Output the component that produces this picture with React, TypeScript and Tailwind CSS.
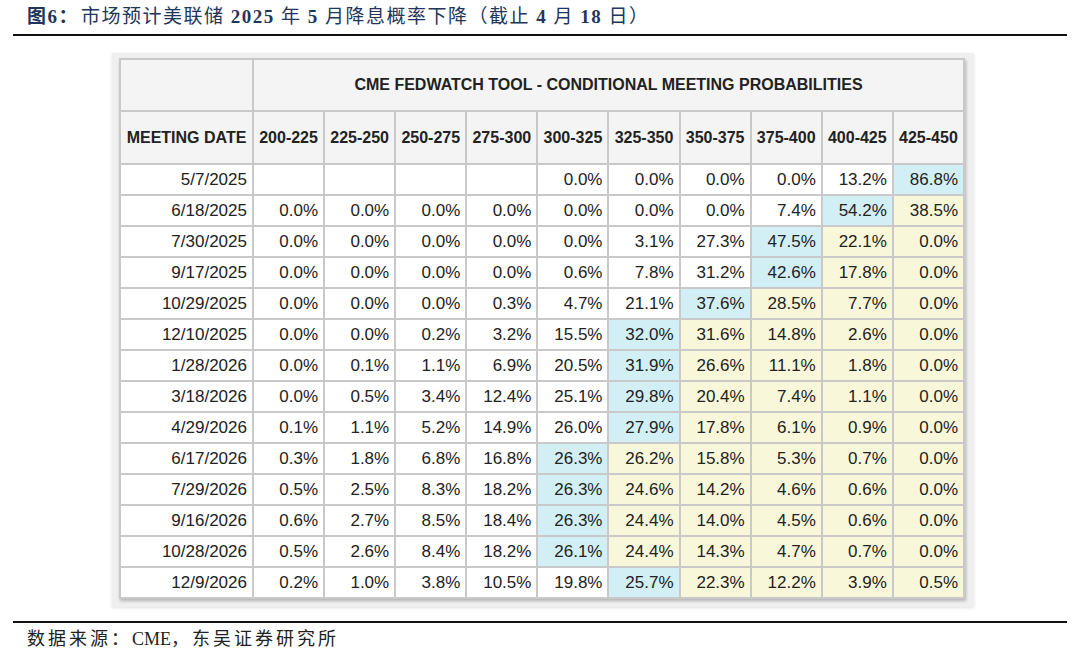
import React from 'react';

const rates = ['200-225', '225-250', '250-275', '275-300', '300-325', '325-350', '350-375', '375-400', '400-425', '425-450'];

// [date, blue column index, values]
const rows: [string, number, string[]][] = [
  ['5/7/2025', 9, ['', '', '', '', '0.0%', '0.0%', '0.0%', '0.0%', '13.2%', '86.8%']],
  ['6/18/2025', 8, ['0.0%', '0.0%', '0.0%', '0.0%', '0.0%', '0.0%', '0.0%', '7.4%', '54.2%', '38.5%']],
  ['7/30/2025', 7, ['0.0%', '0.0%', '0.0%', '0.0%', '0.0%', '3.1%', '27.3%', '47.5%', '22.1%', '0.0%']],
  ['9/17/2025', 7, ['0.0%', '0.0%', '0.0%', '0.0%', '0.6%', '7.8%', '31.2%', '42.6%', '17.8%', '0.0%']],
  ['10/29/2025', 6, ['0.0%', '0.0%', '0.0%', '0.3%', '4.7%', '21.1%', '37.6%', '28.5%', '7.7%', '0.0%']],
  ['12/10/2025', 5, ['0.0%', '0.0%', '0.2%', '3.2%', '15.5%', '32.0%', '31.6%', '14.8%', '2.6%', '0.0%']],
  ['1/28/2026', 5, ['0.0%', '0.1%', '1.1%', '6.9%', '20.5%', '31.9%', '26.6%', '11.1%', '1.8%', '0.0%']],
  ['3/18/2026', 5, ['0.0%', '0.5%', '3.4%', '12.4%', '25.1%', '29.8%', '20.4%', '7.4%', '1.1%', '0.0%']],
  ['4/29/2026', 5, ['0.1%', '1.1%', '5.2%', '14.9%', '26.0%', '27.9%', '17.8%', '6.1%', '0.9%', '0.0%']],
  ['6/17/2026', 4, ['0.3%', '1.8%', '6.8%', '16.8%', '26.3%', '26.2%', '15.8%', '5.3%', '0.7%', '0.0%']],
  ['7/29/2026', 4, ['0.5%', '2.5%', '8.3%', '18.2%', '26.3%', '24.6%', '14.2%', '4.6%', '0.6%', '0.0%']],
  ['9/16/2026', 4, ['0.6%', '2.7%', '8.5%', '18.4%', '26.3%', '24.4%', '14.0%', '4.5%', '0.6%', '0.0%']],
  ['10/28/2026', 4, ['0.5%', '2.6%', '8.4%', '18.2%', '26.1%', '24.4%', '14.3%', '4.7%', '0.7%', '0.0%']],
  ['12/9/2026', 5, ['0.2%', '1.0%', '3.8%', '10.5%', '19.8%', '25.7%', '22.3%', '12.2%', '3.9%', '0.5%']],
];

const cellBg = (i: number, blue: number) => {
  if (i === blue) return 'bg-[#d3eff6]';
  if (i > blue) return 'bg-[#f8f7d9]';
  return 'bg-white';
};

const App: React.FC = () => {
  return (
    <div className="w-[1080px] h-[661px] bg-white flex flex-col">
      <div
        className="mx-[13px] pl-[14px] pt-[5px] h-[34px] text-[19px] leading-[24px] tracking-[1.5px] text-[#22355a] whitespace-nowrap"
        style={{ fontFamily: '"Liberation Serif", "Noto Sans CJK SC", serif' }}
      >
        <span className="font-bold">图6：</span>
        <span className="ml-[2px]">市场预计美联储 </span>
        <span className="font-bold">2025</span>
        <span> 年 </span>
        <span className="font-bold">5</span>
        <span> 月降息概率下降（截止 </span>
        <span className="font-bold">4</span>
        <span> 月 </span>
        <span className="font-bold">18</span>
        <span> 日）</span>
      </div>
      <div className="mx-[13px] h-[2px] bg-[#111]" />

      <div className="mt-[17px] pl-[112px] flex">
        <div className="bg-[#efefef] pl-[7px] pt-[5px] pr-[9px] pb-[8px] shadow-[0_1px_3px_rgba(0,0,0,0.12)]">
          <table
            className="table-fixed w-[846px] border-collapse border-2 border-[#c9c9c9] text-[#222] shadow-[1px_2px_3px_rgba(0,0,0,0.25)]"
            style={{ fontFamily: '"Liberation Sans", Arial, sans-serif' }}
          >
            <colgroup>
              <col className="w-[133px]" />
              {rates.map((r) => (
                <col key={r} />
              ))}
            </colgroup>
            <thead>
              <tr className="h-[52px] bg-[#f4f4f4]">
                <th className="border-2 border-[#c9c9c9]" />
                <th colSpan={10} className="border-2 border-[#c9c9c9] text-[16px] font-bold text-center">
                  CME FEDWATCH TOOL - CONDITIONAL MEETING PROBABILITIES
                </th>
              </tr>
              <tr className="h-[53px] bg-[#f4f4f4]">
                <th className="border-2 border-[#c9c9c9] text-[16px] font-bold text-center whitespace-nowrap">MEETING DATE</th>
                {rates.map((r) => (
                  <th key={r} className="border-2 border-[#c9c9c9] text-[16px] font-bold text-center whitespace-nowrap">
                    {r}
                  </th>
                ))}
              </tr>
            </thead>
            <tbody>
              {rows.map(([date, blue, vals]) => (
                <tr key={date} className="h-[31px]">
                  <td className="border-2 border-[#c9c9c9] bg-white text-right pr-[5px] text-[17px]">{date}</td>
                  {vals.map((v, i) => (
                    <td
                      key={i}
                      className={`border-2 border-[#c9c9c9] text-right pr-[5px] text-[17px] ${cellBg(i, blue)}`}
                    >
                      {v}
                    </td>
                  ))}
                </tr>
              ))}
            </tbody>
          </table>
        </div>
      </div>

      <div className="mt-[14px] mx-[13px] h-[2px] bg-[#111]" />
      <div
        className="mt-[4px] pl-[27px] text-[18px] leading-[24px] tracking-[3px] text-[#222]"
        style={{ fontFamily: '"Liberation Serif", "Noto Sans CJK SC", serif' }}
      >
        数据来源：<span className="tracking-normal">CME</span>，东吴证券研究所
      </div>
    </div>
  );
};

export default App;
